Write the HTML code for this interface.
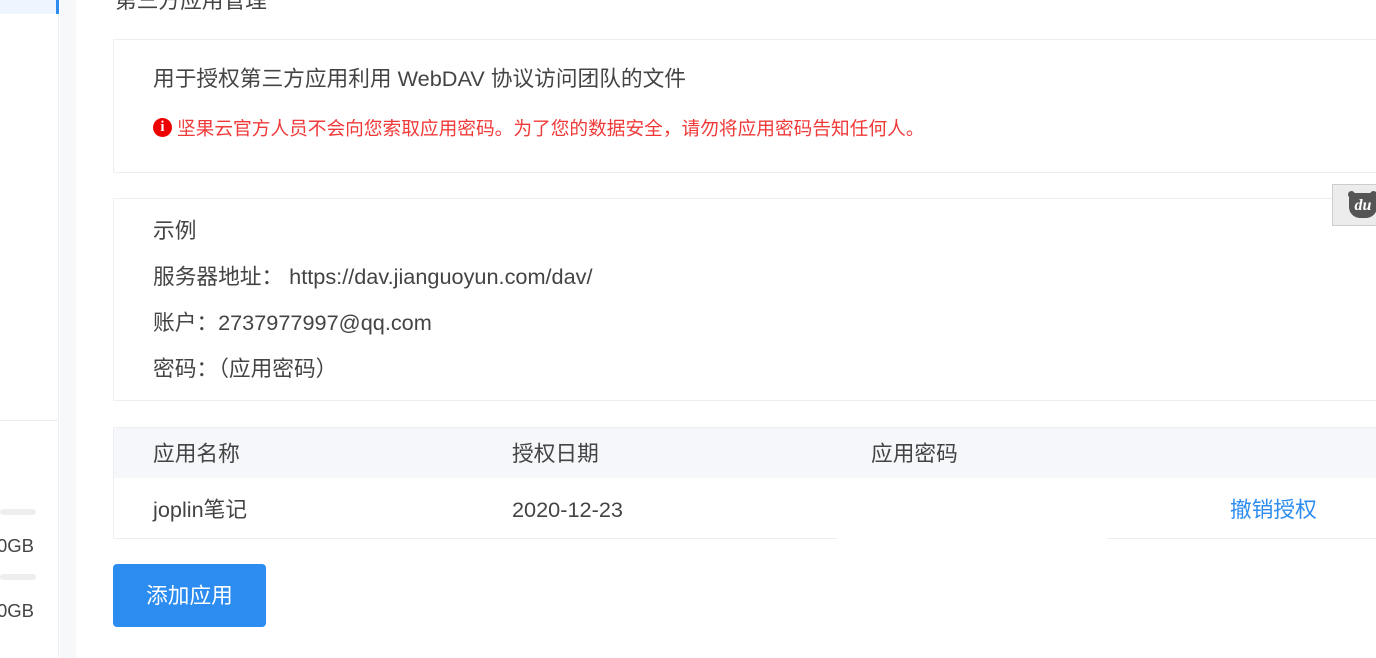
<!DOCTYPE html>
<html><head><meta charset="utf-8"><style>
*{margin:0;padding:0;box-sizing:border-box}
body{width:1376px;height:658px;overflow:hidden;background:#fff;font-family:"Liberation Sans","Noto Sans CJK SC",sans-serif;color:#333;position:relative}
.abs{position:absolute}
.t{position:absolute;white-space:nowrap;line-height:26px;font-size:21.7px;color:#444}
</style></head><body>
<div class="abs" style="left:0;top:0;width:59px;height:658px;background:#fff;border-right:1px solid #eceef2"></div>
<div class="abs" style="left:0;top:0;width:56px;height:14px;background:#eef5fe"></div>
<div class="abs" style="left:56px;top:0;width:3px;height:14px;background:#2d8cf0"></div>
<div class="abs" style="left:60px;top:0;width:16px;height:658px;background:#f7f8fa"></div>
<div class="abs" style="left:0;top:420px;width:59px;height:1px;background:#eee"></div>
<div class="abs" style="left:0;top:509px;width:36px;height:6px;background:#eee;border-radius:3px"></div>
<div class="abs" style="left:0;top:574px;width:36px;height:6px;background:#eee;border-radius:3px"></div>
<div class="t" style="left:-3px;top:533px;font-size:18.5px">0GB</div>
<div class="t" style="left:-3px;top:598px;font-size:18.5px">0GB</div>

<div class="t" style="left:115px;top:-12px">第三方应用管理</div>

<div class="abs" style="left:113px;top:39px;width:1280px;height:134px;border:1px solid #eceef2"></div>
<div class="t" style="left:153px;top:66px">用于授权第三方应用利用 WebDAV 协议访问团队的文件</div>
<div class="abs" style="left:153px;top:118px;width:19px;height:19px;border-radius:50%;background:#e00;color:#fff;font:bold 15px/19px 'Liberation Serif',serif;text-align:center">i</div>
<div class="t" style="left:177px;top:116px;font-size:18.7px;color:#f03a3a">坚果云官方人员不会向您索取应用密码。为了您的数据安全，请勿将应用密码告知任何人。</div>

<div class="abs" style="left:113px;top:198px;width:1280px;height:203px;border:1px solid #eceef2"></div>
<div class="t" style="left:153px;top:218px">示例</div>
<div class="t" style="left:153px;top:264px">服务器地址： https://dav.jianguoyun.com/dav/</div>
<div class="t" style="left:153px;top:310px">账户：2737977997@qq.com</div>
<div class="t" style="left:153px;top:356px">密码：（应用密码）</div>

<div class="abs" style="left:1332px;top:184px;width:50px;height:42px;background:#ececec;border:1px solid #ccc"></div>
<div class="abs" style="left:1348px;top:191px;width:7px;height:7px;border-radius:50%;background:#555"></div>
<div class="abs" style="left:1370px;top:191px;width:7px;height:7px;border-radius:50%;background:#555"></div>
<div class="abs" style="left:1349px;top:193px;width:28px;height:25px;background:#555;border-radius:6px 6px 11px 11px;color:#fff;font:italic bold 16px/25px 'Liberation Serif',serif;text-align:center">du</div>

<div class="abs" style="left:113px;top:427px;width:1280px;height:112px;border:1px solid #eceef2;border-bottom:none"></div>
<div class="abs" style="left:114px;top:428px;width:1270px;height:50px;background:#f5f7fa"></div>
<div class="abs" style="left:113px;top:538px;width:724px;height:1px;background:#eceef2"></div>
<div class="abs" style="left:1107px;top:538px;width:280px;height:1px;background:#eceef2"></div>
<div class="t" style="left:153px;top:441px">应用名称</div>
<div class="t" style="left:512px;top:441px">授权日期</div>
<div class="t" style="left:871px;top:441px">应用密码</div>
<div class="t" style="left:153px;top:497px">joplin笔记</div>
<div class="t" style="left:512px;top:497px">2020-12-23</div>
<div class="t" style="left:1230px;top:497px;color:#2d8cf0">撤销授权</div>

<div class="abs" style="left:113px;top:564px;width:153px;height:63px;background:#2d8cf0;border-radius:4px;color:#fff;font-size:21.7px;line-height:63px;text-align:center">添加应用</div>
</body></html>
